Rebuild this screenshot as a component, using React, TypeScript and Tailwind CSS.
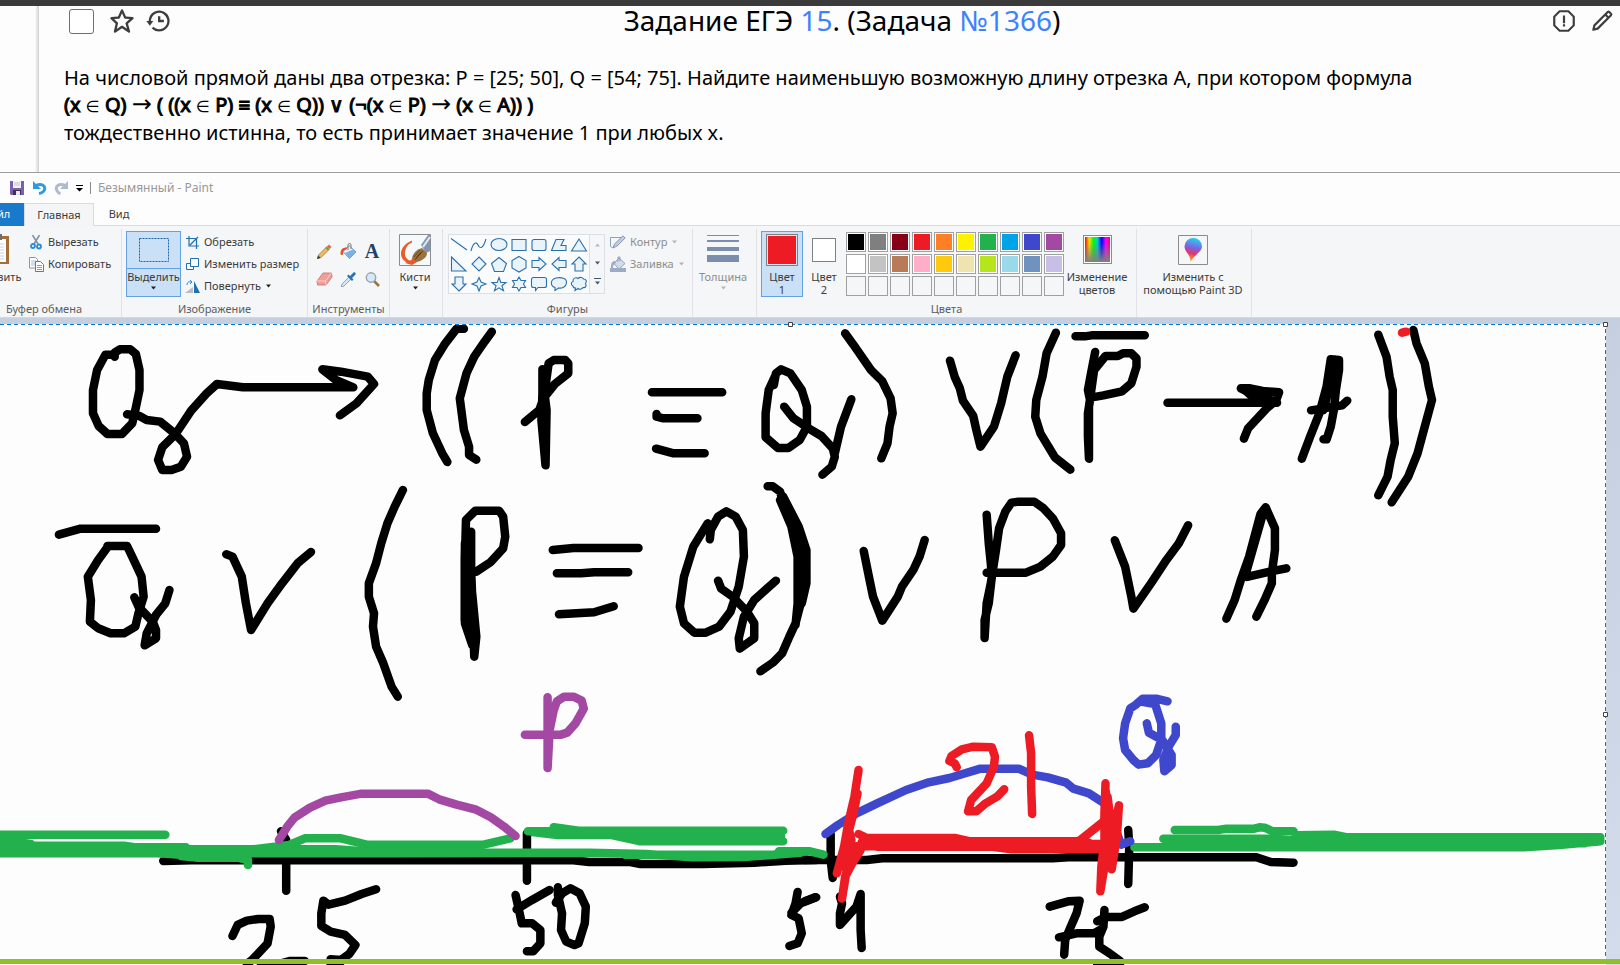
import type { ReactNode } from "react";
import { BiErrorAlt, BiHistory, BiPencil, BiStar } from "react-icons/bi";

function Caret({ className = "text-[#1e1e1e]" }: { className?: string }) {
  return (
    <svg width="7" height="4" viewBox="0 0 7 4" className={`shrink-0 ${className}`} aria-hidden="true">
      <path d="M1 0.500h5L3.500 3.500z" fill="currentColor" />
    </svg>
  );
}

function Group({ label, className = "", children }: { label?: string; className?: string; children: ReactNode }) {
  return (
    <section className={`flex shrink-0 flex-col border-r border-[#dfe1e4] ${className}`}>
      <div className="flex h-[72px] items-start pt-0.5">{children}</div>
      {label && <h2 className="text-center text-[11px] leading-4 text-[#5d5d5d]">{label}</h2>}
    </section>
  );
}

function SmallButton({ icon, text, caret, disabled }: { icon: ReactNode; text: string; caret?: boolean; disabled?: boolean }) {
  return (
    <button
      type="button"
      disabled={disabled}
      className={`flex h-[22px] items-center gap-1 whitespace-nowrap text-[11px] ${disabled ? "text-[#8d8d8d]" : "text-[#3b3b3b]"}`}
    >
      <span className="flex w-4 justify-center">{icon}</span>
      {text}
      {caret && <Caret className={disabled ? "text-[#b4b4b4]" : "text-[#1e1e1e]"} />}
    </button>
  );
}

const SHAPES = [
  "M2 3.500L18 15",
  "M2 16C4 8 7 6 9 10S14 14 17 4",
  "M2 9.500a8 6 0 1 0 16 0a8 6 0 1 0 -16 0z",
  "M3 4.500h14v11H3z",
  "M5 4.500h10a2 2 0 0 1 2 2v7a2 2 0 0 1-2 2H5a2 2 0 0 1-2-2v-7a2 2 0 0 1 2-2z",
  "M7 4.500h8l-3 6h5v5H2.500z",
  "M10 4L17.500 16H2.500z",
  "M2.500 3L17 17H2.500z",
  "M10 3l7 7-7 7-7-7z",
  "M10 3.500l7.500 6-3 8h-9l-3-8z",
  "M10 2.500l7 4v7.500l-7 4-7-4V6.500z",
  "M3 6.500h7V3.500l7 6.500-7 6.500v-3H3z",
  "M17 6.500h-7V3.500L3 10l7 6.500v-3h7z",
  "M10 3l7 7h-3v7H6v-7H3z",
  "M10 17l7-7h-3V3H6v7H3z",
  "M10 3.500l2 4.500 5 2-5 2-2 5-2-5-5-2 5-2z",
  "M10 3.500l1.800 5h5.200l-4 3.300 1.500 5-4.500-3-4.500 3 1.500-5-4-3.300h5.200z",
  "M10 3l2 3.500h4.500L14.500 10l2 3.500H12L10 17l-2-3.500H3.500l2-3.500-2-3.500H8z",
  "M4.500 3.500h11a2 2 0 0 1 2 2v6a2 2 0 0 1-2 2H9L6.500 16.500v-3h-2a2 2 0 0 1-2-2v-6a2 2 0 0 1 2-2z",
  "M6 16.500v-3C1 12 1 5.500 7 4c5-1 11 0 10.500 5C17 13 13 14.500 9.500 14z",
  "M4 12C1.500 11 2 8 4 7.500 3.500 4 7 3 9 4.500 11 2.500 14 3.500 14.500 5 17.500 5 18 7.500 16.500 9.500 18 12 16.500 14 14 13.500 12.500 16 10 15.500 9 14.500L6 16.500 6.500 14C5 14 4 13.500 4 12z",
];

const PALETTE = [
  "#000000", "#7f7f7f", "#880015", "#ed1c24", "#ff7f27", "#fff200", "#22b14c", "#00a2e8", "#3f48cc", "#a349a4",
  "#ffffff", "#c3c3c3", "#b97a57", "#ffaec9", "#ffc90e", "#efe4b0", "#b5e61d", "#99d9ea", "#7092be", "#c8bfe7",
  "", "", "", "", "", "", "", "", "", "",
];

const INK = {
  black: "#000000",
  green: "#22b14c",
  purple: "#a349a4",
  blue: "#3f48cc",
  red: "#ed1c24",
};

type Stroke = [keyof typeof INK, string];

const FORMULA_LEFT: Stroke[] = [
  ["black", "M222 140V128L232 118H252L263 132L270 180V240L262 300L256 340L236 372H208L191 348L180 310V240L188 180L204 134H220"],
  ["black", "M246 313L270 318L284 330L310 335L338 370L356 400L362 440L350 470L332 480H314L306 450L314 412L340 372L370 302L400 250L420 222L470 232H684L650 210L624 178L660 185L712 200L724 222L690 280L658 316"],
  ["black", "M898 56H884L862 100L842 150L830 210L826 250V300L838 370L856 430L866 456"],
  ["black", "M952 65L938 95L918 140L903 190L890 265L898 360L908 410V435L922 449"],
  ["black", "M1050 178V250L1048 330L1056 466L1058 300L1054 250L1062 160L1072 150H1094L1100 160V190L1074 222L1052 265L1044 300L1016 336"],
  ["black", "M1262 247H1398M1271 312V320L1284 325H1350M1270 416L1304 430H1364"],
  ["black", "M1498 225L1502 190L1512 178L1530 190L1552 240L1562 290V350L1548 390L1526 414H1506L1482 382V310L1488 240L1500 200"],
  ["black", "M1518 290L1536 325L1562 352L1590 378L1612 415L1616 440L1610 470L1592 494M1616 430L1628 350L1648 268"],
  ["black", "M114 674L156 656H302"],
  ["black", "M208 708H246L262 760L274 800L278 860L268 910L262 950L240 970H214L190 955L174 935L176 870L170 800L190 750L208 712"],
  ["black", "M260 862L268 890L296 936L302 960V985L280 1006L284 970L302 915L320 880L328 840"],
  ["black", "M438 733L450 740L468 800L476 880L486 960L518 880L546 820L576 760L602 726"],
  ["black", "M780 540L764 590L750 640L738 700L728 760L714 820V860L724 910L722 950L728 1010L742 1060L758 1130L770 1160"],
  ["black", "M912 665V780L916 940L918 1040L922 980L914 850M900 930V750L902 630L920 602H966L974 620L978 680L974 715L950 756L922 785"],
  ["black", "M900 700V940L914 1005"],
  ["black", "M1070 720L1110 714H1236M1078 790H1125L1150 787H1216M1082 913L1150 907L1188 889"],
  ["black", "M1374 688L1376 660L1390 620L1406 604L1424 620L1438 660L1440 740L1430 830L1414 905L1392 950L1366 968H1344L1324 940L1316 890L1324 800L1342 710L1370 640"],
  ["black", "M1390 812L1396 836L1418 860L1446 905L1460 940V985L1432 1016L1430 985L1440 920L1460 870L1502 812"],
  ["black", "M1486 529H1496L1510 545L1518 590L1542 650L1558 720L1560 800L1550 880L1540 940L1528 980L1514 1030L1496 1058L1472 1084M1510 570L1532 650L1544 740V880L1540 945"],
  ["black", "M1516 560L1546 650L1561 720V820L1552 880"],
];

const FORMULA_RIGHT: Stroke[] = [
  ["black", "M68 70L84 104L118 180L140 214L156 265L160 310L154 350L150 400L138 445"],
  ["black", "M271 152L280 200L290 235L296 272L316 318L322 360L330 410L356 350L370 280L382 200L398 136"],
  ["black", "M476 68L458 130L450 200L438 270L436 320L446 370L474 442L504 479"],
  ["black", "M514 79H532L545 76H648"],
  ["black", "M552 126L544 190L538 240L542 270L538 310V380L540 446V290L550 180L572 138H596L606 130H622L632 145V170L622 220L604 244L568 256L546 262"],
  ["black", "M692 278H904L870 262L834 235H852L876 243L908 247L902 272L884 295L848 355L840 386"],
  ["black", "M842 240L862 268H890L872 250"],
  ["black", "M952 446L968 380L986 310L1000 230L1008 148L1024 150V180L1018 240L1014 300L1008 350L1000 388H994"],
  ["black", "M1016 150L1004 240L994 300M970 301L1030 286L1040 272"],
  ["black", "M1100 74L1116 140L1122 200L1128 240V320L1132 400L1124 450L1118 500L1100 556"],
  ["black", "M1168 60L1174 100L1190 160L1198 230L1204 270L1190 350L1176 430L1158 500L1126 577"],
  ["red", "M1146 68L1154 65"],
  ["black", "M104 723L114 800L122 860L140 932L170 860L178 830L200 780L212 740L222 690"],
  ["black", "M342 614L346 700L350 760L352 800L346 880L338 930V984L342 880L350 820L360 720L366 655L378 605L390 578L404 575H434L452 595L470 625L486 670V705L470 740L446 770L418 788H342"],
  ["black", "M590 691L610 770L622 860L626 896L660 820L690 750L714 700L732 646"],
  ["black", "M806 926L822 870L834 810L850 740L862 670L872 612L882 592L900 655V720L894 790V820L880 870L864 920M876 615L842 800M846 801L890 785L922 775"],
];

const AXIS_LEFT: Stroke[] = [
  ["black", "M316 543L370 541H1110L1140 546H1220L1240 552H1360L1460 548L1520 542L1580 540"],
  ["black", "M544 454L554 480V632M1020 460V602"],
  ["black", "M450 768L460 735L478 722L500 717H522L524 740L518 790L500 820L488 840L478 852M505 856H530L562 843H590"],
  ["black", "M728 628L700 642L668 662L636 674L626 662L622 700V738L640 755L668 765L688 795L676 822L660 840L640 838M640 856L660 845"],
  ["black", "M998 645L1006 700L1010 730H1030L1046 750V790L1032 814H1020M1064 630L1030 660L1000 688"],
  ["black", "M1080 622V645L1088 700L1086 750L1096 785L1112 795L1120 790L1132 730L1134 680L1122 640L1104 625L1088 640L1076 668"],
  ["black", "M1544 636L1540 670L1532 705L1546 715L1552 760L1544 790L1528 798M1532 698L1550 670L1580 652"],
  ["green", "M0 464H320M0 480L60 492M0 497H240L260 502H360M0 508H490L560 495L590 475H660L710 494H936L988 475"],
  ["green", "M0 520H770L1140 518L1250 522L1340 532L1440 531L1560 517M360 508L650 508L740 518H1140M1210 524H1500"],
  ["green", "M350 528L380 533H460L480 540V555M310 520L400 530"],
  ["green", "M1022 454L1070 453L1072 442L1120 452H1516M1030 456L1080 465H1200M1180 464L1240 484H1516M1200 470H1512"],
  ["purple", "M540 480L556 440L570 413L600 383L630 362L660 352L700 341H828L850 358L884 374L920 388L950 412L976 440L998 468"],
  ["purple", "M1060 52V264L1064 150L1072 90L1078 64L1092 50H1110L1126 62L1130 86L1114 130L1098 158L1086 164H1016"],
];

const AXIS_RIGHT: Stroke[] = [
  ["black", "M-10 540H110L140 535H470L500 532H864L892 546L936 548"],
  ["black", "M40 462V540L44 594M616 450L618 500L616 612"],
  ["black", "M10 652L-10 664"],
  ["black", "M58 650L62 670L58 700V735L78 700L90 680L98 642V750L100 804"],
  ["black", "M464 680L500 664L522 662L516 700L502 750L494 780L492 824M482 772L516 760H550L564 748"],
  ["black", "M570 690L568 740L560 770V800L580 820L600 843M556 724L572 711H604L628 694L648 682M556 852H600"],
  ["green", "M-60 514H0L26 524M628 502H1380L1450 495L1530 484M684 476H900L940 482H1530M890 490H1500M900 495H1400"],
  ["green", "M706 450H790L806 446H860L870 442L880 443L896 454H936M940 466L1014 464L1040 472H1530"],
  ["blue", "M30 462L54 435L90 400L130 370L186 330L230 307L270 294L330 266H404L430 284L460 292L496 308L510 326L540 340L570 370L590 440L602 494L620 484"],
  ["blue", "M692 64L670 56H644L630 75L620 85L610 130L606 175L610 210L626 240L636 254L654 250L670 225L680 180V130L668 72L640 65M652 130L656 158L682 180L692 205L700 225V255L686 274L684 240L696 195L708 165V140"],
  ["red", "M94 270L86 350L74 430L66 500L52 580M74 440L80 480L70 580L62 656L68 590L82 550L98 510L74 505M76 460L74 550M94 462L110 474H280L310 484H520L568 425L574 400M92 340L84 400L74 460L60 560M100 487L130 500H350L390 508H560M90 499H350"],
  ["red", "M120 484H340M280 488H540M300 492H560"],
  ["red", "M572 310L570 400V480L564 560L562 634L570 560L584 480L598 376L594 470L584 568L578 400L572 330M574 420L584 500L574 550L570 500M576 350L580 400"],
  ["red", "M284 262L280 250L270 243L274 228L294 208L316 200L352 202L358 230L356 260L342 310L312 360L306 394L322 394L340 370L362 350L376 328M424 166L428 220V320L430 402"],
];

function Ink({ strokes, x, y }: { strokes: Stroke[]; x: number; y: number }) {
  return (
    <g transform={`translate(${x} ${y}) scale(0.5166 0.3333)`}>
      {strokes.map(([ink, d]) => (
        <path key={d} d={d} stroke={INK[ink]} vectorEffect="non-scaling-stroke" />
      ))}
    </g>
  );
}

function In() {
  return <span className="font-['DejaVu_Sans',sans-serif] text-base leading-none [-webkit-text-stroke:0px]">∈</span>;
}

function Implies() {
  return <span className="font-['DejaVu_Sans',sans-serif] text-2xl leading-none [-webkit-text-stroke:0px]">→</span>;
}

function Task() {
  return (
    <main className="flex h-[166px] pl-[35px] font-['Noto_Sans','Open_Sans',sans-serif] text-black">
      <div className="w-1 shrink-0 bg-linear-to-r from-[#fdfdfd] to-[#cfcfcf]" />
      <article className="-mr-7 min-w-0 grow">
        <header className="grid h-[29px] grid-cols-[1fr_auto_1fr] items-center pr-[33px] pl-[30px] text-[#3d3d3d]">
          <div className="flex items-center">
            <input
              type="checkbox"
              aria-label="Задача решена"
              className="size-[25px] appearance-none rounded-[3px] border border-[#6e6e6e] bg-white"
            />
            <button type="button" aria-label="В избранное" className="ml-3.5">
              <BiStar className="size-7" />
            </button>
            <button type="button" aria-label="История" className="ml-2">
              <BiHistory className="size-7" />
            </button>
          </div>
          <h1 className="pb-0.5 text-[28px] leading-7 text-black">
            Задание ЕГЭ <a href="#type-15" className="text-[#3b82ff]">15</a>. (Задача{" "}
            <a href="#task-1366" className="text-[#3b82ff]">№1366</a>)
          </h1>
          <div className="flex items-center justify-end gap-3">
            <button type="button" aria-label="Сообщить об ошибке">
              <BiErrorAlt className="size-[26px]" />
            </button>
            <button type="button" aria-label="Редактировать">
              <BiPencil className="size-[26px]" />
            </button>
          </div>
        </header>
        <p className="pt-[29px] pl-[25px] text-xl leading-[27px]">
          На числовой прямой даны два отрезка: P = [25; 50], Q = [54; 75]. Найдите наименьшую возможную длину отрезка A, при котором формула
          <br />
          <strong className="font-normal [-webkit-text-stroke:1px_black]">
            (x <In /> Q) <Implies /> ( ((x <In /> P){" "}
            <span className="font-['Liberation_Sans',sans-serif] font-bold">≡</span> (x <In /> Q)) ∨ (¬(x <In /> P){" "}
            <Implies /> (x <In /> A)) )
          </strong>
          <br />
          тождественно истинна, то есть принимает значение 1 при любых x.
        </p>
      </article>
    </main>
  );
}

function TitleBar() {
  return (
    <div className="flex h-[30px] items-center pl-[10px] text-xs text-[#999]">
      <button type="button" aria-label="Сохранить">
        <svg width="14" height="14" viewBox="0 0 14 14">
          <path d="M0 0h14v14H1l-1-1z" fill="#7b5fae" />
          <path d="M3 0h8v7H3z" fill="#f4f2f8" />
          <path d="M4 2h6M4 4h6" stroke="#c6c3cf" />
          <path d="M3 9h8v5H3z" fill="#3c3450" />
          <path d="M6 10h4v4H6z" fill="#e9e6f1" />
        </svg>
      </button>
      <button type="button" aria-label="Отменить" className="ml-[9px]">
        <svg width="14" height="14" viewBox="0 0 14 14">
          <path d="M3 4.500C9 2 12.500 5 11.500 8.500 11 10.500 9 12 6 12.500" fill="none" stroke="#2f9ae0" strokeWidth="3" />
          <path d="M0 0v8h8z" fill="#2f9ae0" />
        </svg>
      </button>
      <button type="button" aria-label="Повторить" className="ml-[7px]">
        <svg width="14" height="14" viewBox="0 0 14 14">
          <path d="M11 4.500C5 2 1.500 5 2.500 8.500 3 10.500 4.500 12 6.500 12.500" fill="none" stroke="#adbad0" strokeWidth="3" />
          <path d="M14 0v8H6z" fill="#adbad0" />
        </svg>
      </button>
      <button type="button" aria-label="Настройка панели" className="ml-2">
        <svg width="7" height="7" viewBox="0 0 7 7">
          <path d="M0 0h7v1H0zM0 3h7L3.500 6.500z" fill="#000" />
        </svg>
      </button>
      <span className="mx-[7px] h-3 w-px bg-[#8a8a8a]" />
      <span>Безымянный - Paint</span>
    </div>
  );
}

function Tabs() {
  return (
    <nav className="-ml-8 flex h-[23px] text-[11px] text-[#3b3b3b] shadow-[inset_0_-1px_0_#dadbdc]">
      <button type="button" className="w-14 bg-[#1979ca] text-white">Файл</button>
      <button type="button" className="w-[70px] border border-b-0 border-[#dadbdc] bg-[#f4f5f7]">Главная</button>
      <button type="button" className="w-[50px]">Вид</button>
    </nav>
  );
}

function ClipboardGroup() {
  return (
    <Group label="Буфер обмена" className="w-[155px]">
      <button type="button" className="flex w-[61px] flex-col items-center pt-[3px] text-[11px] leading-4 text-[#3b3b3b]">
        <svg width="32" height="32" viewBox="0 0 32 32">
          <path d="M1 2h26v28H1z" fill="#a3703c" />
          <path d="M4 5h20v23H4z" fill="#fff" />
          <path d="M6 10h16M6 13h16M6 16h16M6 19h16M6 22h16M6 25h16" stroke="#c4d6ea" />
          <path d="M8 0h12v6H8z" fill="#6f6f6f" />
        </svg>
        <span className="mt-[3px] mb-px">Вставить</span>
        <Caret />
      </button>
      <div className="flex flex-col">
        <SmallButton
          text="Вырезать"
          icon={
            <svg width="12" height="15" viewBox="0 0 12 15">
              <path d="M2.500 0L8 9M9.500 0L4 9" stroke="#7f93ab" strokeWidth="1.600" />
              <path d="M1 11a2 2 0 1 0 4 0a2 2 0 1 0-4 0M7 11.500a2 2 0 1 0 4 0a2 2 0 1 0-4 0" fill="none" stroke="#2b8bd8" strokeWidth="1.800" />
            </svg>
          }
        />
        <SmallButton
          text="Копировать"
          icon={
            <svg width="15" height="15" viewBox="0 0 15 15">
              <path d="M.5.5h6l2 2V11h-8z" fill="#fff" stroke="#8d949c" />
              <path d="M2 4h5M2 6h4M2 8h4" stroke="#9fbfe0" />
              <path d="M6.500 4.500h5l3 3v7h-8z" fill="#fff" stroke="#707780" />
              <path d="M8 8.500h5M8 10.500h5M8 12.500h5" stroke="#6fa4dc" />
            </svg>
          }
        />
      </div>
    </Group>
  );
}

function ImageGroup() {
  return (
    <Group label="Изображение" className="w-[186px]">
      <button type="button" className="ml-1 flex h-[66px] w-[55px] flex-col items-center border border-[#62a2e4] bg-[#c9e0f7] text-[11px] leading-4 text-[#3b3b3b]">
        <span className="flex h-[37px] w-full items-center justify-center border-b border-[#62a2e4]">
          <svg width="30" height="24" viewBox="0 0 30 24">
            <path d="M.5.5h29v23H.5z" fill="none" stroke="#1e63a4" strokeDasharray="2 1" />
          </svg>
        </span>
        <span className="mb-px">Выделить</span>
        <Caret />
      </button>
      <div className="ml-[3px] flex flex-col">
        <SmallButton
          text="Обрезать"
          icon={
            <svg width="13" height="13" viewBox="0 0 13 13">
              <path d="M3 0v10h10M0 2.500h10.500V13M4 9L12 1" fill="none" stroke="#1e6fb5" strokeWidth="1.200" />
            </svg>
          }
        />
        <SmallButton
          text="Изменить размер"
          icon={
            <svg width="13" height="13" viewBox="0 0 13 13">
              <path d="M.5 5.500h7v6h-7z" fill="#fff" stroke="#1e6fb5" />
              <path d="M4.500.5h8v8h-8z" fill="#fff" stroke="#1e6fb5" />
            </svg>
          }
        />
        <SmallButton
          text="Повернуть"
          caret
          icon={
            <svg width="15" height="13" viewBox="0 0 15 13">
              <path d="M8 13H0l8-6z" fill="#b9bdc2" />
              <path d="M9 13V1l6 12z" fill="#1e6fb5" />
              <path d="M2 5C2 2 4 1.500 6 2M5 0l2 2-2 2" fill="none" stroke="#2b8bd8" />
            </svg>
          }
        />
      </div>
    </Group>
  );
}

function ToolsGroup() {
  return (
    <Group label="Инструменты" className="w-[82px]">
      <div className="grid grid-cols-3 gap-y-1 pt-2 pl-1">
        <button type="button" aria-label="Карандаш" className="flex size-6 items-center justify-center">
          <svg width="15" height="15" viewBox="0 0 15 15">
            <path d="M0 15l1.500-4L10 2.500 12.500 5 4 13.500z" fill="#f2b95f" stroke="#8a6a3a" strokeWidth=".7" />
            <path d="M0 15l1.300-3.500 2.200 2.200z" fill="#3c3c3c" />
            <path d="M10 2.500L12 .5 14.500 3l-2 2z" fill="#e0695e" />
            <path d="M9 3.500L11.500 6" stroke="#5d9c4c" strokeWidth="1.500" />
          </svg>
        </button>
        <button type="button" aria-label="Заливка цветом" className="flex size-6 items-center justify-center">
          <svg width="17" height="16" viewBox="0 0 17 16">
            <path d="M9 2.500L16 9l-6.500 6.500L3 8.500z" fill="#e6f0fa" stroke="#6f93b8" />
            <path d="M5 10l8-3.500 3 2.500-6.500 6.500z" fill="#7ab2e4" />
            <path d="M8 7V2a1.500 1.500 0 0 1 3 0v4" fill="none" stroke="#7c7c7c" />
            <path d="M8 4.500C3 4 .5 6 .5 10.500c0 2 2.500 2 2.500 0C3 8 4 7 6 6.500z" fill="#e2502c" />
          </svg>
        </button>
        <button type="button" aria-label="Текст" className="flex size-6 items-center justify-center font-['Liberation_Serif',serif] text-xl font-bold text-[#1f4166]">
          A
        </button>
        <button type="button" aria-label="Ластик" className="flex size-6 items-center justify-center">
          <svg width="17" height="14" viewBox="0 0 17 14">
            <path d="M7 1h8.500L16 5 10 13H1.500L1 9z" fill="#ef9f98" stroke="#c96d68" strokeWidth=".8" />
            <path d="M1 9h8.500L15.500 1M9.500 9l.5 4" fill="none" stroke="#fbd2cc" />
          </svg>
        </button>
        <button type="button" aria-label="Палитра" className="flex size-6 items-center justify-center">
          <svg width="15" height="15" viewBox="0 0 15 15">
            <path d="M0 15l1-3 7-7 2 2-7 7z" fill="#d8e6f3" stroke="#7b93ab" strokeWidth=".8" />
            <path d="M6 4l5 5 1.500-1.500L11 6l3.500-3.500c.6-1.500-.8-2.600-2-2L9 4 7.500 2.500z" fill="#2173ba" />
          </svg>
        </button>
        <button type="button" aria-label="Масштаб" className="flex size-6 items-center justify-center">
          <svg width="15" height="15" viewBox="0 0 15 15">
            <path d="M9 9l5 5" stroke="#a0703c" strokeWidth="2.500" />
            <circle cx="6" cy="5.500" r="4.700" fill="#d4e9fa" stroke="#9aa3ac" strokeWidth="1.400" />
          </svg>
        </button>
      </div>
    </Group>
  );
}

function BrushGroup() {
  return (
    <Group className="w-[53px]">
      <button type="button" className="flex w-[50px] flex-col items-center pt-[3px] text-[11px] leading-4 text-[#3b3b3b]">
        <svg width="32" height="32" viewBox="0 0 32 32">
          <path d="M.5.5h31v31H.5z" fill="#f4f9fb" stroke="#8c8c8c" />
          <path d="M13 6.500C4 10 0 18 3 24c3 5 9 6 12 5-5-2-10-5-9-11C7 13 9 10 13 8.500z" fill="#ea5a2b" />
          <path d="M22 11L29 1h2v16l-4 2z" fill="#8196b5" />
          <path d="M24 13l7-10" stroke="#e4ebf5" strokeWidth="2" />
          <path d="M13 29c-1-8 3-13 10-15l5 5c0 5-6 9-15 10z" fill="#9c7140" />
          <path d="M16 26c2-4 5-7 8-9M15 23l6-7" stroke="#6e4a26" />
          <path d="M6 29l8-4 4 3-5 3z" fill="#ea5a2b" />
        </svg>
        <span className="mt-[3px] mb-px">Кисти</span>
        <Caret />
      </button>
    </Group>
  );
}

function ShapesGroup() {
  return (
    <Group label="Фигуры" className="w-[250px]">
      <div className="mt-[3px] ml-[5px] flex h-[60px] border border-[#dcdfe3] bg-[#fafbfd]">
        <div className="grid grid-cols-7">
          {SHAPES.map((d, i) => (
            <button key={d} type="button" aria-label={`Фигура ${i + 1}`} className="h-[19px] w-5">
              <svg width="20" height="20" viewBox="0 0 20 20">
                <path d={d} fill={i < 2 ? "none" : "#e9f3fa"} stroke="#2a70ae" strokeWidth="1.100" />
              </svg>
            </button>
          ))}
        </div>
        <div className="flex w-[15px] flex-col items-center justify-between border-l border-[#dcdfe3] bg-[#f4f6f8] py-2 text-[#44546a]">
          <button type="button" aria-label="Вверх" className="rotate-180 text-[#b5bac2]"><Caret className="" /></button>
          <button type="button" aria-label="Вниз"><Caret className="" /></button>
          <button type="button" aria-label="Все фигуры" className="border-t border-[#44546a] pt-0.5"><Caret className="" /></button>
        </div>
      </div>
      <div className="ml-[5px] flex flex-col">
        <SmallButton
          text="Контур"
          caret
          disabled
          icon={
            <svg width="16" height="14" viewBox="0 0 16 14">
              <path d="M11 2.500H.5v9L3 13" fill="none" stroke="#8fa0bd" />
              <path d="M3 13l1.500-4L13 .8 15.200 3 7 11z" fill="#c3cde0" stroke="#8396b8" />
            </svg>
          }
        />
        <SmallButton
          text="Заливка"
          caret
          disabled
          icon={
            <svg width="16" height="16" viewBox="0 0 16 16">
              <path d="M9 2l6 5.500-6 5.500-5-5.500z" fill="#d4dcea" stroke="#8fa0bd" />
              <path d="M0 12h16v4H0zM5 5C2 5 1 7 1 12h2c0-3 1-4 3-5z" fill="#9dabc4" />
              <path d="M8 6V1h2v4" fill="none" stroke="#8fa0bd" />
            </svg>
          }
        />
      </div>
    </Group>
  );
}

function SizeGroup() {
  return (
    <Group className="w-16">
      <button type="button" disabled className="flex w-[60px] flex-col items-center pt-[3px] text-[11px] leading-4 text-[#8d8d8d]">
        <svg width="32" height="32" viewBox="0 0 32 32">
          <path d="M0 1h32v1H0zM0 6h32v2H0zM0 13h32v4H0zM0 21h32v7H0z" fill="#7b8eae" />
        </svg>
        <span className="mt-[3px] mb-px">Толщина</span>
        <Caret className="text-[#b4b4b4]" />
      </button>
    </Group>
  );
}

function ColorsGroup() {
  return (
    <Group label="Цвета" className="w-[380px]">
      <button type="button" className="ml-1 flex h-[66px] w-[42px] flex-col items-center border border-[#62a2e4] bg-[#c9e0f7] pt-0.5 text-[11px] leading-[13px] text-[#3b3b3b]">
        <span className="mb-1 size-8 border border-[#808080] bg-[#ed1c24] shadow-[inset_0_0_0_1px_#d9e6f2]" />
        Цвет
        <br />1
      </button>
      <button type="button" className="flex h-[66px] w-[42px] flex-col items-center pt-[7px] text-[11px] leading-[13px] text-[#3b3b3b]">
        <span className="mb-2 size-6 border border-[#808080] bg-white" />
        Цвет
        <br />2
      </button>
      <div className="mt-px ml-px grid grid-cols-10 gap-0.5">
        {PALETTE.map((color, i) => (
          <button
            key={i}
            type="button"
            aria-label={color ? `Цвет ${color}` : "Пустая ячейка"}
            disabled={!color}
            className="size-5 border border-[#a0a0a0] p-px"
            style={{ background: color ? "#ffffff" : "transparent" }}
          >
            <span className="block size-4" style={{ background: color || "transparent" }} />
          </button>
        ))}
      </div>
      <button type="button" className="flex w-[66px] flex-col items-center pt-1 text-[11px] leading-[13px] text-[#3b3b3b]">
        <span className="mb-[6px] size-[29px] border border-[#8c8c8c] bg-white p-px">
          <span className="block size-full bg-[linear-gradient(to_bottom,transparent_20%,#808080),linear-gradient(to_right,#f00,#fd0,#0f0,#0cc,#00f,#f0f,#f04)]" />
        </span>
        Изменение
        <br />
        цветов
      </button>
    </Group>
  );
}

function Paint3DGroup() {
  return (
    <Group className="w-[115px]">
      <button type="button" className="flex w-[112px] flex-col items-center pt-1 text-[11px] leading-[13px] whitespace-nowrap text-[#3b3b3b]">
        <svg width="30" height="30" viewBox="0 0 30 30" className="mb-[5px]">
          <defs>
            <linearGradient id="drop" x1="0.600" y1="0" x2="0.400" y2="1">
              <stop offset="0" stopColor="#24d3ee" />
              <stop offset=".4" stopColor="#7a63e8" />
              <stop offset=".65" stopColor="#e0366e" />
              <stop offset="1" stopColor="#fdb913" />
            </linearGradient>
          </defs>
          <path d="M.5.5h29v29H.5z" fill="#f6f6f6" stroke="#8c8c8c" />
          <path d="M15 3a8.500 8.500 0 0 1 9 8.500C24 17 16 20 12.500 27 13 20 6.500 17 6.500 11.500A8.500 8.500 0 0 1 15 3z" fill="url(#drop)" />
        </svg>
        Изменить с
        <br />
        помощью Paint 3D
      </button>
    </Group>
  );
}

function Canvas() {
  return (
    <div className="relative overflow-hidden bg-linear-to-b from-[#c5cfe0] to-[#d3dceb] pt-1.5">
      <svg width="1610" height="641" viewBox="0 324 1610 641" fill="none" className="block max-w-none overflow-visible" role="img" aria-label="Рисунок решения задачи">
        <path d="M0 324h1606v641H0z" fill="#fdfdfd" />
        <g strokeWidth="8.500" strokeLinecap="round" strokeLinejoin="round">
          <Ink strokes={FORMULA_LEFT} x={0} y={310} />
          <Ink strokes={FORMULA_RIGHT} x={810} y={310} />
          <Ink strokes={AXIS_LEFT} x={0} y={680} />
          <Ink strokes={AXIS_RIGHT} x={810} y={680} />
        </g>
        <path d="M0 324.500H1605.500V965" stroke="#fff" />
        <path d="M0 324.500H1605.500V965" stroke="#0078d7" strokeDasharray="4 3" />
        <path d="M788.500 322.500h4v4h-4zM1603.500 322.500h4v4h-4zM1603.500 712.500h4v4h-4z" fill="#fff" stroke="#444" />
      </svg>
      <div className="absolute inset-x-0 bottom-px h-[5px] bg-[#8fc02a]" />
    </div>
  );
}

export default function App() {
  return (
    <div className="min-h-screen overflow-hidden bg-[#fdfdfd]">
      <div className="h-1.5 bg-[#3a3a3a]" />
      <Task />
      <section className="border-t border-[#9c9c9c] font-['Noto_Sans','Open_Sans',sans-serif]">
        <TitleBar />
        <Tabs />
        <div className="-ml-[33px] flex border-b border-[#d5d7da] bg-[#f4f6f8] pt-[3px]">
          <ClipboardGroup />
          <ImageGroup />
          <ToolsGroup />
          <BrushGroup />
          <ShapesGroup />
          <SizeGroup />
          <ColorsGroup />
          <Paint3DGroup />
        </div>
        <Canvas />
      </section>
    </div>
  );
}
